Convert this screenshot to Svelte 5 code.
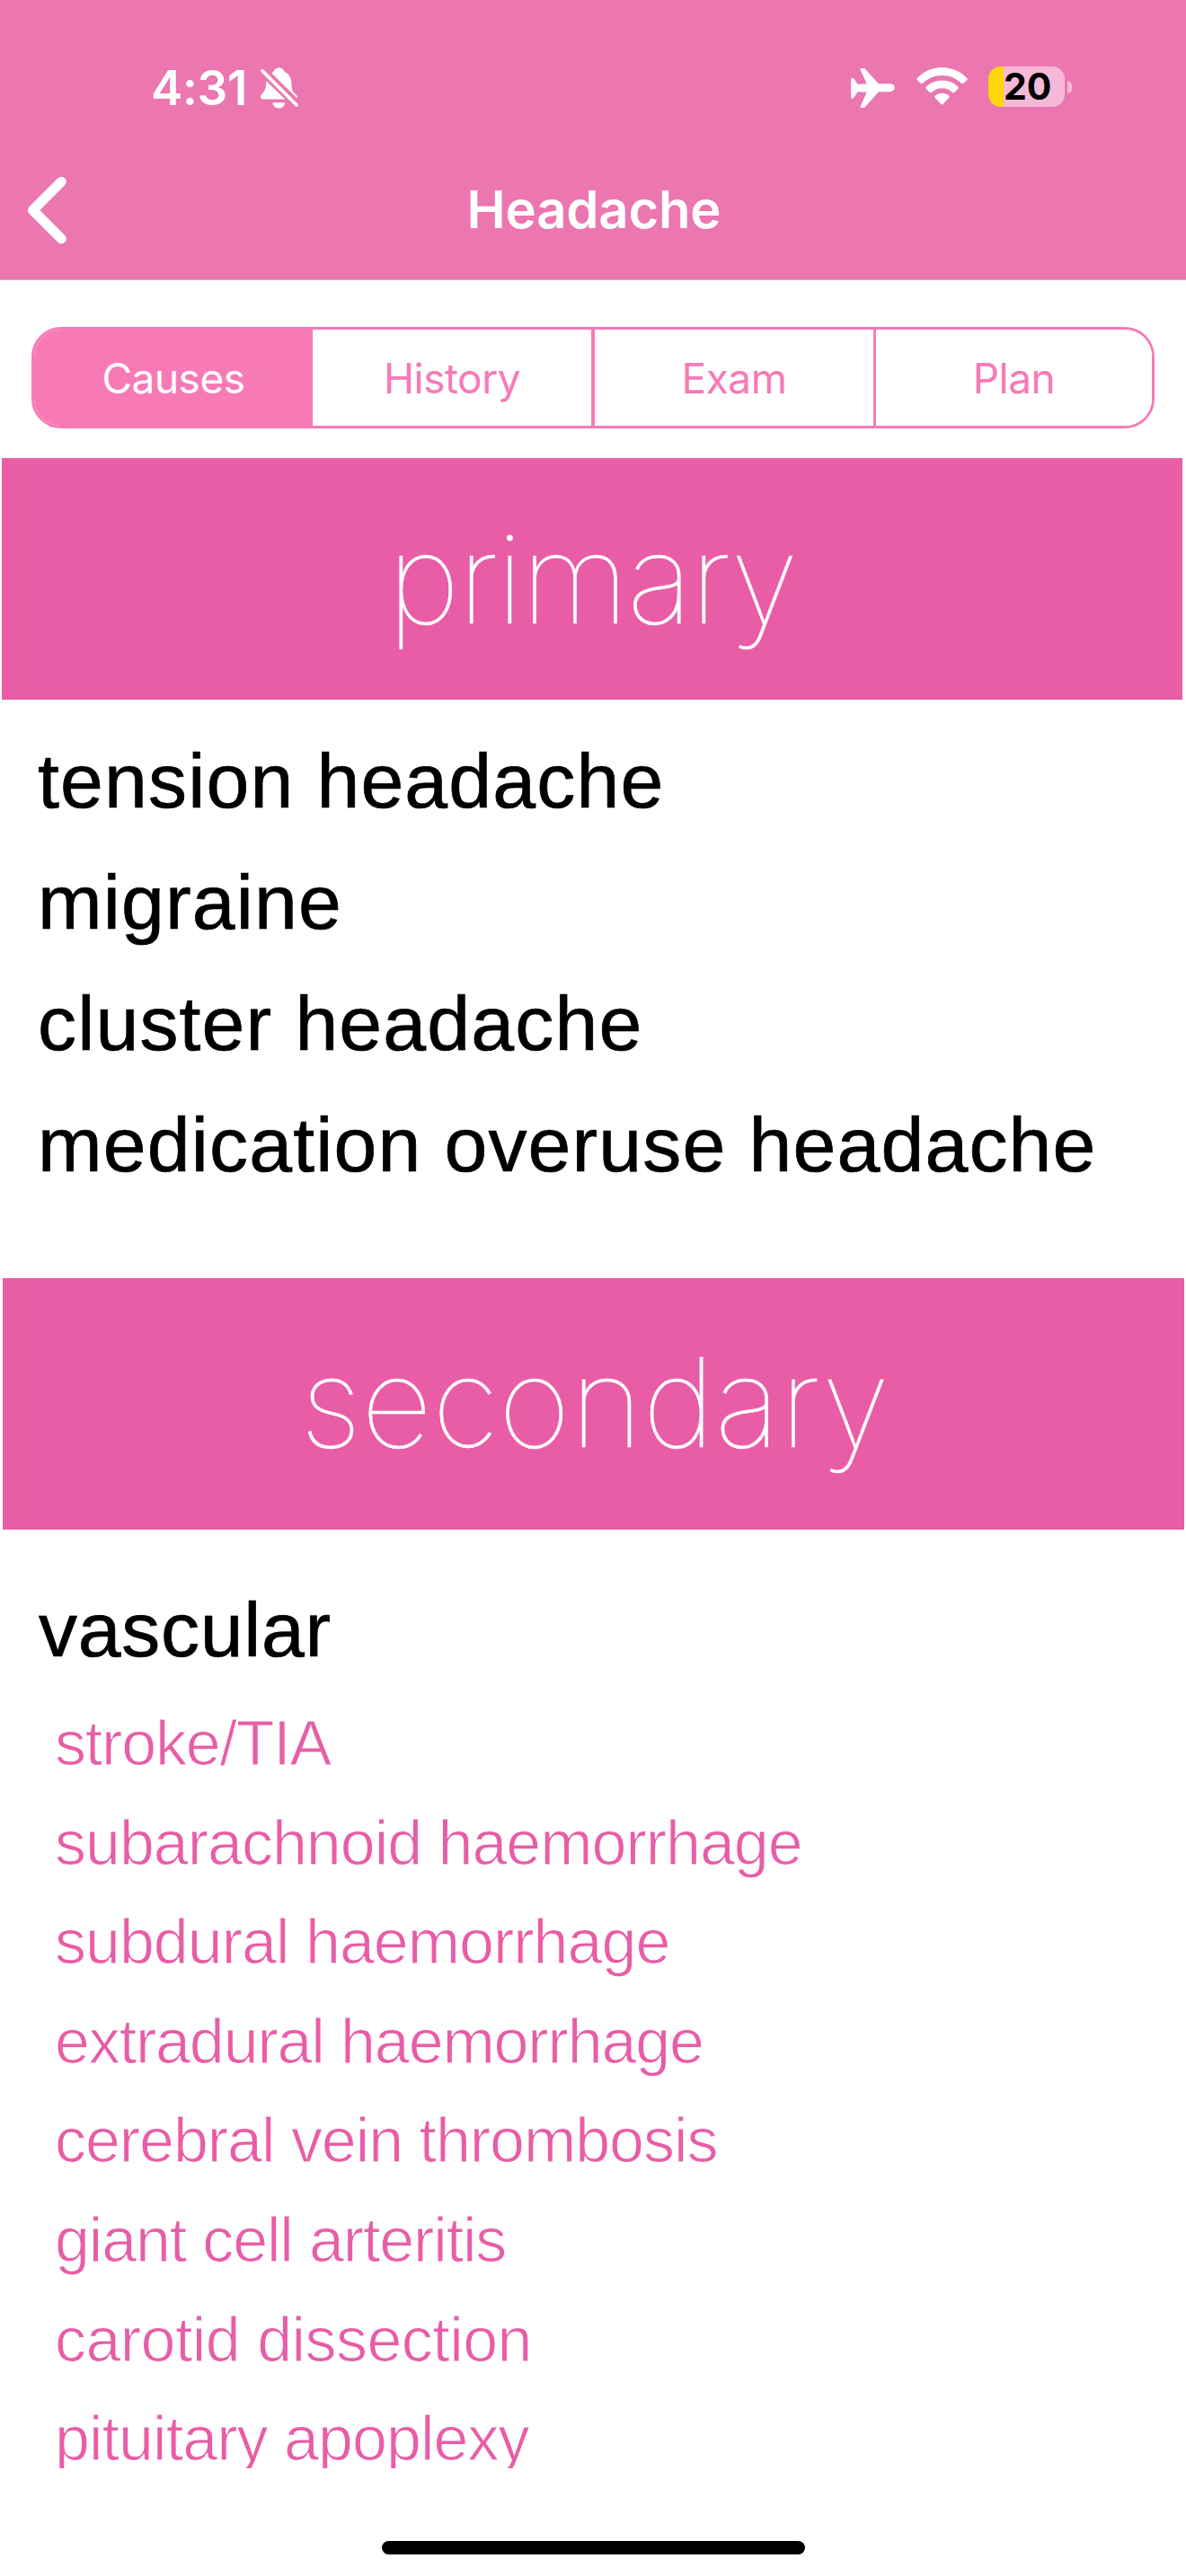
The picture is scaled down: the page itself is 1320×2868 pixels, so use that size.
<script>
  const tabs = ['Causes', 'History', 'Exam', 'Plan'];
  let active = $state('Causes');

  const primary = [
    'tension headache',
    'migraine',
    'cluster headache',
    'medication overuse headache'
  ];

  // Each entry carries its own letter spacing, in pixels.
  const vascular = [
    { name: 'stroke/TIA', tracking: -1.2 },
    { name: 'subarachnoid haemorrhage', tracking: -1.02 },
    { name: 'subdural haemorrhage', tracking: -1 },
    { name: 'extradural haemorrhage', tracking: -1.15 },
    { name: 'cerebral vein thrombosis', tracking: -1.05 },
    { name: 'giant cell arteritis', tracking: -1.15 },
    { name: 'carotid dissection', tracking: -0.55 },
    { name: 'pituitary apoplexy', tracking: -0.95 }
  ];
</script>

<div class="screen">
  <header>
    <div class="status">
      <div class="clock">
        <span class="time">4:31</span>
        <svg class="bell" viewBox="0 0 126 137" fill="#fff" aria-label="Silent mode">
          <path d="M37 19q4-3 6-7Q50 0 61 0t18 12q2 3 6 5 15 9 18 31 1 20 3 27 2 8 12 15 7 6 5 14z" />
          <path d="M19 45l63 61H9q-9 0-9-8 0-6 7-12 9-9 11-24z" />
          <path d="M40 117h42q-4 19-21 19t-21-19z" />
          <path d="M6 11l114 114" stroke="#fff" stroke-width="11" stroke-linecap="round" />
        </svg>
      </div>
      <div class="indicators">
        <svg class="plane" viewBox="0 0 147 133" fill="#fff" aria-label="Airplane mode">
          <path d="M0 33h6q3 0 5 3l11 18 31-1.500L31 4q-1-4 3-4h9q3 0 5 3l45 49h38q16 1 16 13t-16 14H93l-45 50q-2 4-5 4h-9q-4 0-3-3l22-49-31-2-11 18q-2 4-5 4H0z" />
        </svg>
        <svg class="wifi" viewBox="0 0 172 127" fill="#fff" aria-label="Wi-Fi">
          <path d="M86 0C53 0 23 15 2 36q-3 3 0 6l12 12q3 3 6 0C38 37 61 27 86 27s48 10 66 27q3 3 6 0l12-12q3-3 0-6C149 15 119 0 86 0z" />
          <path d="M86 44C64 44 45 53 32 66q-3 3 0 6l13 13q3 3 5 0C60 76 72 70 86 70s26 6 36 15q2 3 5 0l13-13q3-3 0-6C127 53 108 44 86 44z" />
          <path d="M86 87C76 87 68 91 62 96q-3 3 0 6l22 23q2 2 4 0l22-23q3-3 0-6C104 91 96 87 86 87z" />
        </svg>
        <div class="battery"><span>20</span></div>
        <div class="nub"></div>
      </div>
    </div>
    <nav>
      <svg class="back" viewBox="0 0 44 76" fill="none" aria-label="Back">
        <path d="M38.300 6.200L6.500 38l31.800 31.800" stroke="#fff" stroke-width="11" stroke-linecap="round" stroke-linejoin="round" />
      </svg>
      <h1>Headache</h1>
      <div></div>
    </nav>
  </header>

  <div class="tabs">
    {#each tabs as tab}
      <button class:active={tab === active} onclick={() => (active = tab)}>{tab}</button>
    {/each}
  </div>

  <main>
    <h2 class="first">primary</h2>
    <ul class="primary">
      {#each primary as item}<li>{item}</li>{/each}
    </ul>

    <h2 class="second">secondary</h2>
    <h3>vascular</h3>
    <ul class="vascular">
      {#each vascular as item}
        <li style:letter-spacing="{item.tracking}px">{item.name}</li>
      {/each}
    </ul>
  </main>

  <footer><div class="home"></div></footer>
</div>

<style>
  :global(body) {
    margin: 0;
    background: #fff;
  }
  .screen {
    width: 1320px;
    height: 2868px;
    overflow: hidden;
    display: flex;
    flex-direction: column;
    background: #fff;
    font-family: Inter, sans-serif;
  }
  h1, h2, h3, ul, li {
    margin: 0;
    padding: 0;
    list-style: none;
  }
  svg {
    display: block;
    flex: none;
  }

  header {
    flex: none;
    box-sizing: border-box;
    height: 312px;
    background: #eb76b0;
    border-bottom: 1px solid #c0b4ba;
    color: #fff;
  }
  .status {
    height: 196px;
    display: flex;
    align-items: center;
    justify-content: space-between;
    padding: 0 127px 0 168px;
  }
  .clock,
  .indicators {
    display: flex;
    align-items: center;
  }
  .time {
    width: 122px;
    font-size: 53px;
    line-height: 64px;
    font-weight: 600;
    letter-spacing: -0.3px;
  }
  .bell {
    width: 42px;
    height: 46px;
  }
  .plane {
    width: 49px;
    height: 44px;
    margin-right: 24px;
  }
  .wifi {
    width: 57px;
    height: 42px;
    margin: 0 23px 4px 0;
  }
  .battery {
    box-sizing: border-box;
    width: 85px;
    height: 45px;
    margin: 0 3px 3px 0;
    border-radius: 14px;
    background: linear-gradient(90deg, #ffd60a 17.500px, #f5b9d7 17.500px);
    color: #000;
    font-size: 41px;
    line-height: 45px;
    font-weight: 700;
    padding-left: 17px;
  }
  .nub {
    width: 5px;
    height: 14px;
    margin-bottom: 2px;
    border-radius: 0 5px 5px 0;
    background: #f5b9d7;
  }

  nav {
    box-sizing: border-box;
    height: 74px;
    display: grid;
    grid-template-columns: 1fr auto 1fr;
    align-items: center;
    padding: 0 28px 0 30px;
  }
  .back {
    width: 44px;
    height: 76px;
  }
  h1 {
    font-size: 58px;
    line-height: 70px;
    padding-bottom: 2px;
    font-weight: 600;
    letter-spacing: -0.200px;
  }

  .tabs {
    flex: none;
    box-sizing: border-box;
    width: 1250px;
    height: 113px;
    margin: 52px 35px 33px;
    display: grid;
    grid-template-columns: 310px 310px 314px 310px;
    border: 3px solid #f77ab6;
    border-radius: 33px;
    overflow: hidden;
  }
  button {
    appearance: none;
    margin: 0;
    padding: 0;
    border: 0 solid #f77ab6;
    background: #fff;
    color: #f77ab6;
    font: 400 46px/56px Inter, sans-serif;
    letter-spacing: -0.500px;
  }
  button:nth-child(3) {
    border-left-width: 4px;
  }
  button:nth-child(4) {
    border-left-width: 3px;
  }
  button.active {
    background: #f77ab6;
    color: #fff;
  }

  main {
    flex: none;
    height: 2238px;
    overflow: hidden;
  }
  h2 {
    box-sizing: border-box;
    display: flex;
    align-items: center;
    justify-content: center;
    background: #e85da6;
    color: #fff;
    font-size: 138px;
    line-height: 167px;
    font-weight: 100;
    -webkit-text-stroke: 0.500px #fff;
  }
  h2.first {
    height: 269px;
    margin: 0 4px 0 2px;
    padding-bottom: 2px;
    letter-spacing: -2px;
  }
  h2.second {
    height: 280px;
    margin: 81px 2px 0 3px;
    padding: 0 0 5px 3px;
  }
  .primary {
    padding: 23px 0 0 42px;
  }
  .primary li,
  h3 {
    font: 400 86px/135px "Liberation Sans", Arial, sans-serif;
    letter-spacing: 1.150px;
    color: #000;
    -webkit-text-stroke: 0.700px #000;
    white-space: nowrap;
  }
  h3 {
    padding: 44px 0 0 43px;
    letter-spacing: 0.700px;
  }
  .vascular {
    padding: 4px 0 0 61px;
  }
  /* A background-coloured outline slims the regular face down to a light one. */
  .vascular li {
    font: 400 70px/110.600px "Liberation Sans", Arial, sans-serif;
    color: #e85da6;
    -webkit-text-stroke: 1.100px #fff;
    white-space: nowrap;
  }

  footer {
    flex: 1;
    display: flex;
    justify-content: center;
    align-items: flex-end;
    padding-bottom: 24px;
  }
  .home {
    width: 471px;
    height: 15px;
    border-radius: 8px;
    background: #000;
  }
</style>
